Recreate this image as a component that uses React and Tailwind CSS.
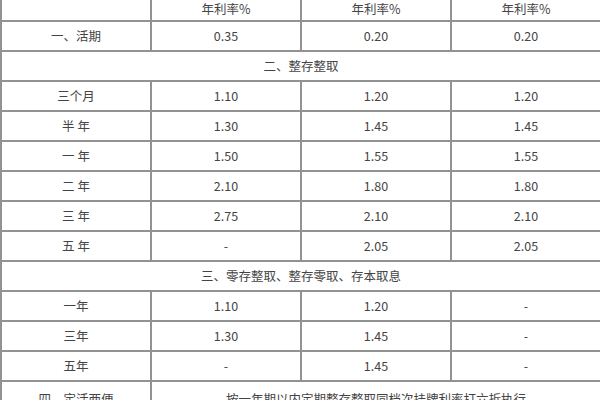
import React from "react";

const font = { fontFamily: '"Noto Sans CJK SC", "Noto Sans", sans-serif' };

const rows = [
  { type: "row", cells: ["一、活期", "0.35", "0.20", "0.20"] },
  { type: "section", text: "二、整存整取" },
  { type: "row", cells: ["三个月", "1.10", "1.20", "1.20"] },
  { type: "row", cells: ["半 年", "1.30", "1.45", "1.45"] },
  { type: "row", cells: ["一 年", "1.50", "1.55", "1.55"] },
  { type: "row", cells: ["二 年", "2.10", "1.80", "1.80"] },
  { type: "row", cells: ["三 年", "2.75", "2.10", "2.10"] },
  { type: "row", cells: ["五 年", "-", "2.05", "2.05"] },
  { type: "section", text: "三、零存整取、整存零取、存本取息" },
  { type: "row", cells: ["一年", "1.10", "1.20", "-"] },
  { type: "row", cells: ["三年", "1.30", "1.45", "-"] },
  { type: "row", cells: ["五年", "-", "1.45", "-"] },
];

const cell = "border-2 border-[#929292] h-[30px] p-0 text-center align-middle whitespace-pre";

export default function App() {
  return (
    <div className="w-[600px] h-[400px] overflow-hidden bg-white text-[#444444] text-[12.5px]" style={font}>
      <table className="-mt-[10px] w-[600px] table-fixed border-collapse">
        <colgroup>
          <col className="w-[150px]" />
          <col className="w-[150px]" />
          <col className="w-[150px]" />
          <col className="w-[150px]" />
        </colgroup>
        <tbody>
          <tr>
            <td className={cell}></td>
            <td className={`${cell} pt-[6px]`}>年利率%</td>
            <td className={`${cell} pt-[6px]`}>年利率%</td>
            <td className={`${cell} pt-[6px]`}>年利率%</td>
          </tr>
          {rows.map((r, i) =>
            r.type === "section" ? (
              <tr key={i}>
                <td colSpan={4} className={cell}>
                  {r.text}
                </td>
              </tr>
            ) : (
              <tr key={i}>
                {r.cells.map((c, j) => (
                  <td key={j} className={cell}>
                    {c}
                  </td>
                ))}
              </tr>
            )
          )}
          <tr>
            <td className={`${cell} pt-[6px]`}>四、定活两便</td>
            <td colSpan={3} className={`${cell} pt-[6px]`}>
              按一年期以内定期整存整取同档次挂牌利率打六折执行
            </td>
          </tr>
        </tbody>
      </table>
    </div>
  );
}
